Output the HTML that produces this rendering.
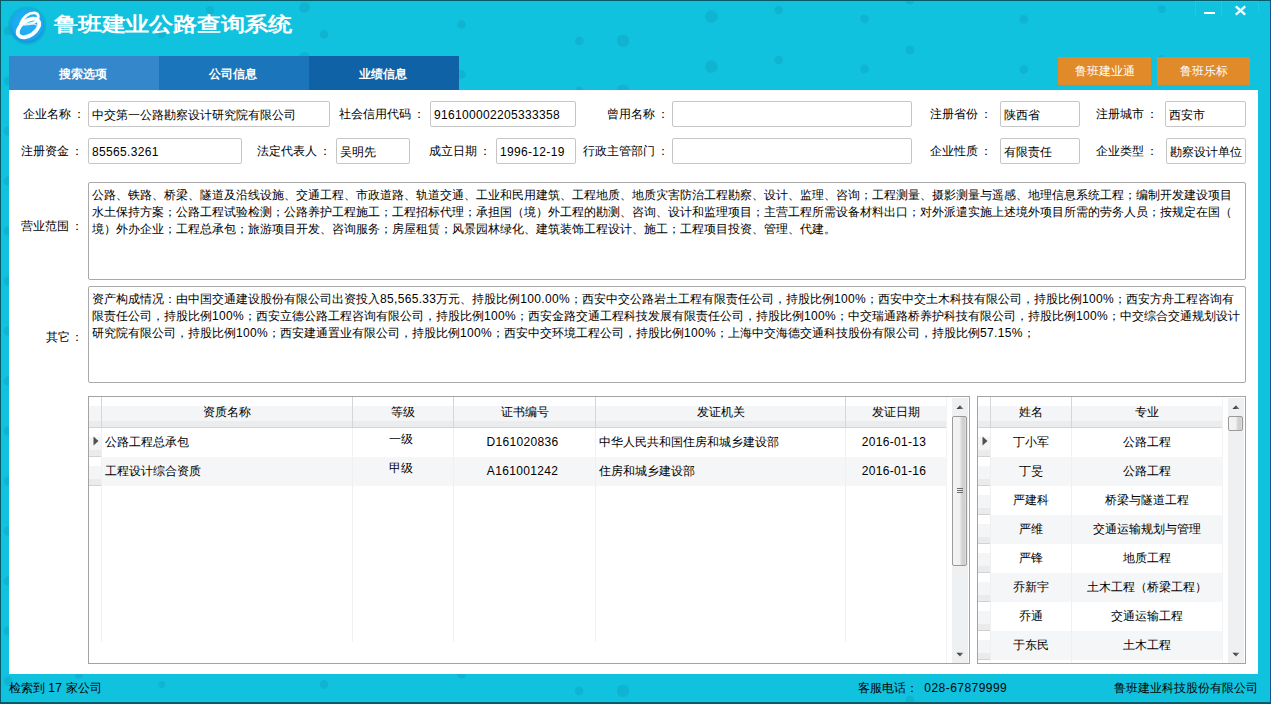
<!DOCTYPE html>
<html><head><meta charset="utf-8">
<style>
*{box-sizing:border-box;margin:0;padding:0}
html,body{width:1271px;height:704px;overflow:hidden}
body{position:relative;background:#11c2de;font-family:"Liberation Sans",sans-serif;font-size:12px;color:#000}
.a{position:absolute}
.nw{white-space:nowrap}
.co{margin-left:2px}
.d{letter-spacing:.33px}
#frame{position:absolute;left:0;top:0;width:1271px;height:704px;border:1px solid #075b68;border-right-color:#1f4f86;border-bottom-width:2px;pointer-events:none}
.tab{position:absolute;top:56px;height:34px;width:150px;color:#fff;text-align:center;line-height:36px;font-size:12px;font-weight:bold;text-indent:-2px}
.obtn{position:absolute;top:57px;height:28px;width:93px;background:#e08a2a;color:#fff;text-align:center;line-height:28px;font-size:12px}
#panel{position:absolute;left:9px;top:90px;width:1249px;height:584px;background:#fff}
.lbl{position:absolute;height:17px;line-height:17px;white-space:nowrap;text-align:right}
.inp{position:absolute;height:26px;border:1px solid #c6c6c6;border-radius:2px;line-height:24px;padding-left:3px;padding-top:1px;white-space:nowrap;overflow:hidden;background:#fff}
.ta{position:absolute;border:1px solid #a9a9a9;border-radius:2px;background:#fff;padding:4px 0 0 3px;line-height:17px}
.ta div{white-space:nowrap}
.grid{position:absolute;top:396px;height:268px;border:1px solid #a0a0a0;background:#fff;overflow:hidden}
.hdr{position:absolute;top:0;height:31px;background:linear-gradient(#fff 0,#fff 9px,#f4f5f6 10px,#f4f5f6 23px,#eaeced 24px,#eaeced 30px,#d6d6d6 30px)}
.vl{position:absolute;top:0;width:1px;background:#ececec}
.hv{position:absolute;top:0;width:1px;height:30px;background:#d4d4d4}
.row{position:absolute;height:29px;line-height:29px;white-space:nowrap}
.alt{background:#f5f6f7}
.rh{position:absolute;width:12px;height:29px;background:linear-gradient(#fff 0,#fff 10px,#f4f5f6 10px,#f4f5f6 21px,#e9ebec 21px,#e9ebec 28px,#d4d4d4 28px)}
.cell{position:absolute;top:0;height:29px;line-height:29px;white-space:nowrap;overflow:hidden}
.c{text-align:center}
.sb{position:absolute;top:0;width:17px;background:#f0f0f0}
.status{position:absolute;top:680px;height:17px;line-height:17px;white-space:nowrap}
</style></head><body>

<svg class="a" style="left:0;top:0" width="1271" height="704"><defs><pattern id="dp" x="0" y="0" width="1271" height="50" patternUnits="userSpaceOnUse"><g fill="#0fb4d1"><circle cx="8" cy="31" r="4.5"/><circle cx="79" cy="25" r="4"/><circle cx="162" cy="34.5" r="3.5"/><circle cx="210" cy="10" r="4"/><circle cx="304.5" cy="7.5" r="5.5"/><circle cx="324" cy="34.5" r="4.4"/><circle cx="461.5" cy="24.5" r="4.4"/><circle cx="579.3" cy="40.8" r="4.4"/><circle cx="623" cy="40.8" r="6.3"/><circle cx="711.4" cy="16.5" r="6.3"/><circle cx="778.7" cy="10" r="4.4"/><circle cx="864.5" cy="18.8" r="4.4"/><circle cx="910" cy="0" r="4.5"/><circle cx="910" cy="50" r="4.5"/><circle cx="1023.8" cy="19.3" r="4.4"/><circle cx="1161.8" cy="9.1" r="4.2"/></g></pattern></defs><rect width="1271" height="704" fill="url(#dp)"/></svg>
<!-- logo -->
<svg class="a" style="left:8px;top:6px" width="40" height="40" viewBox="0 0 40 40">
  <defs>
    <radialGradient id="lg" cx="50%" cy="45%" r="55%">
      <stop offset="0" stop-color="#25b6f5"/>
      <stop offset="0.8" stop-color="#1aa8f0"/>
      <stop offset="1" stop-color="#1290e0"/>
    </radialGradient>
  </defs>
  <circle cx="19.3" cy="19.7" r="19.2" fill="#0ea6c4" opacity=".5"/>
  <circle cx="19.3" cy="19.7" r="17" fill="url(#lg)"/>
  <ellipse cx="19.8" cy="22.3" rx="12.6" ry="7.6" transform="rotate(-36 19.8 22.3)" fill="none" stroke="#233f9c" stroke-width="1" opacity=".55"/>
  <ellipse cx="20.5" cy="22" rx="12.2" ry="7.3" transform="rotate(-36 20.5 22)" fill="none" stroke="#fbfdff" stroke-width="3.8"/>
  <path d="M12.5 18.5 C15 10.5 21 6.5 26.5 6.8 C31 7.2 31.5 12 28 15.2 C25.5 17.3 21 18.2 16.5 18.2" fill="none" stroke="#fbfdff" stroke-width="2.8" stroke-linecap="round"/>
  <path d="M17 18.2 C21 17.8 26 17.5 30 19.5" fill="none" stroke="#cfe8f8" stroke-width="1.2"/>
</svg>

<div class="a nw" style="left:54px;top:10px;font-size:24px;font-weight:900;color:#fff;line-height:34px;letter-spacing:-0.2px;transform:scaleY(.83);transform-origin:0 0">鲁班建业公路查询系统</div>

<!-- window buttons -->
<div class="a" style="left:1204px;top:12px;width:11px;height:2px;background:#fff"></div>
<svg class="a" style="left:1234px;top:5px" width="13" height="11" viewBox="0 0 13 11"><path d="M1.8 1.3 L11.2 9.7 M11.2 1.3 L1.8 9.7" stroke="#fff" stroke-width="2.3"/></svg>
<div class="a" style="left:1195px;top:1px;width:27px;height:14px;border:1px dotted rgba(255,255,255,.14);border-bottom:0"></div>
<div class="a" style="left:1222px;top:1px;width:37px;height:11px;border:1px dotted rgba(255,255,255,.14);border-bottom:0;border-left:0"></div>

<!-- tabs -->
<div class="tab" style="left:9px;background:#3587cb">搜索选项</div>
<div class="tab" style="left:159px;background:#1a75ba">公司信息</div>
<div class="tab" style="left:309px;background:#0f62a5">业绩信息</div>

<div class="obtn" style="left:1058px">鲁班建业通</div>
<div class="obtn" style="left:1157px">鲁班乐标</div>

<div id="panel"></div>

<!-- form row 1 -->
<div class="lbl" style="left:23px;top:106px">企业名称<span class="co">：</span></div>
<div class="inp" style="left:88px;top:101px;width:242px">中交第一公路勘察设计研究院有限公司</div>
<div class="lbl" style="left:339px;top:106px">社会信用代码<span class="co">：</span></div>
<div class="inp" style="left:430px;top:101px;width:146px"><span class="d">916100002205333358</span></div>
<div class="lbl" style="left:607px;top:106px">曾用名称<span class="co">：</span></div>
<div class="inp" style="left:672px;top:101px;width:240px"></div>
<div class="lbl" style="left:930px;top:106px">注册省份<span class="co">：</span></div>
<div class="inp" style="left:1000px;top:101px;width:80px">陕西省</div>
<div class="lbl" style="left:1096px;top:106px">注册城市<span class="co">：</span></div>
<div class="inp" style="left:1165px;top:101px;width:81px">西安市</div>

<!-- form row 2 -->
<div class="lbl" style="left:21px;top:143px">注册资金<span class="co">：</span></div>
<div class="inp" style="left:88px;top:138px;width:154px"><span class="d">85565.3261</span></div>
<div class="lbl" style="left:257px;top:143px">法定代表人<span class="co">：</span></div>
<div class="inp" style="left:336px;top:138px;width:74px">吴明先</div>
<div class="lbl" style="left:429px;top:143px">成立日期<span class="co">：</span></div>
<div class="inp" style="left:496px;top:138px;width:80px"><span class="d">1996-12-19</span></div>
<div class="lbl" style="left:583px;top:143px">行政主管部门<span class="co">：</span></div>
<div class="inp" style="left:672px;top:138px;width:240px"></div>
<div class="lbl" style="left:930px;top:143px">企业性质<span class="co">：</span></div>
<div class="inp" style="left:1000px;top:138px;width:80px">有限责任</div>
<div class="lbl" style="left:1096px;top:143px">企业类型<span class="co">：</span></div>
<div class="inp" style="left:1166px;top:138px;width:80px">勘察设计单位</div>

<!-- textareas -->
<div class="lbl" style="left:21px;top:218px">营业范围<span class="co">：</span></div>
<div class="ta" style="left:88px;top:182px;width:1158px;height:98px">
<div>公路、铁路、桥梁、隧道及沿线设施、交通工程、市政道路、轨道交通、工业和民用建筑、工程地质、地质灾害防治工程勘察、设计、监理、咨询；工程测量、摄影测量与遥感、地理信息系统工程；编制开发建设项目</div>
<div>水土保持方案；公路工程试验检测；公路养护工程施工；工程招标代理；承担国（境）外工程的勘测、咨询、设计和监理项目；主营工程所需设备材料出口；对外派遣实施上述境外项目所需的劳务人员；按规定在国（</div>
<div>境）外办企业；工程总承包；旅游项目开发、咨询服务；房屋租赁；风景园林绿化、建筑装饰工程设计、施工；工程项目投资、管理、代建。</div>
</div>

<div class="lbl" style="left:46px;top:329px">其它<span class="co" style="margin-left:1px">：</span></div>
<div class="ta" style="left:88px;top:286px;width:1158px;height:97px">
<div>资产构成情况：由中国交通建设股份有限公司出资投入<span class="d">85,565.33</span>万元、持股比例<span class="d">100.00%</span>；西安中交公路岩土工程有限责任公司，持股比例<span class="d">100%</span>；西安中交土木科技有限公司，持股比例<span class="d">100%</span>；西安方舟工程咨询有</div>
<div>限责任公司，持股比例<span class="d">100%</span>；西安立德公路工程咨询有限公司，持股比例<span class="d">100%</span>；西安金路交通工程科技发展有限责任公司，持股比例<span class="d">100%</span>；中交瑞通路桥养护科技有限公司，持股比例<span class="d">100%</span>；中交综合交通规划设计</div>
<div>研究院有限公司，持股比例<span class="d">100%</span>；西安建通置业有限公司，持股比例<span class="d">100%</span>；西安中交环境工程公司，持股比例<span class="d">100%</span>；上海中交海德交通科技股份有限公司，持股比例<span class="d">57.15%</span>；</div>
</div>

<!-- GRIDS -->
<div class="a" style="left:88px;top:396px;width:882px;height:268px;border:1px solid #a3a3a3;background:#fff;overflow:hidden">
<div class="a" style="left:0;top:0;width:857px;height:31px;background:linear-gradient(#fff 0,#fff 9px,#f4f5f6 9px,#f4f5f6 24px,#eaecee 24px,#eaecee 30px,#d4d4d4 30px,#d4d4d4 31px)"></div>
<div class="a" style="left:0;top:31px;width:12px;height:29px;background:linear-gradient(#fff 0,#fff 9px,#f4f5f6 9px,#f4f5f6 22px,#e9ebec 22px,#e9ebec 28px,#d2d2d2 28px,#d2d2d2 29px)"></div>
<div class="a" style="left:12px;top:60px;width:845px;height:29px;background:#f5f6f7"></div>
<div class="a" style="left:0;top:60px;width:12px;height:29px;background:linear-gradient(#fff 0,#fff 9px,#f4f5f6 9px,#f4f5f6 22px,#e9ebec 22px,#e9ebec 28px,#d2d2d2 28px,#d2d2d2 29px)"></div>
<div class="a" style="left:12px;top:0;width:1px;height:31px;background:#d6d6d6"></div>
<div class="a" style="left:12px;top:31px;width:1px;height:214px;background:#f0f0f0"></div>
<div class="a" style="left:263px;top:0;width:1px;height:31px;background:#d6d6d6"></div>
<div class="a" style="left:263px;top:31px;width:1px;height:214px;background:#f0f0f0"></div>
<div class="a" style="left:364px;top:0;width:1px;height:31px;background:#d6d6d6"></div>
<div class="a" style="left:364px;top:31px;width:1px;height:214px;background:#f0f0f0"></div>
<div class="a" style="left:506px;top:0;width:1px;height:31px;background:#d6d6d6"></div>
<div class="a" style="left:506px;top:31px;width:1px;height:214px;background:#f0f0f0"></div>
<div class="a" style="left:756px;top:0;width:1px;height:31px;background:#d6d6d6"></div>
<div class="a" style="left:756px;top:31px;width:1px;height:214px;background:#f0f0f0"></div>
<div class="a" style="left:857px;top:0;width:1px;height:268px;background:#f3f3f3"></div>
<div class="a nw" style="left:13px;top:7px;width:250px;height:17px;line-height:17px;text-align:center">资质名称</div>
<div class="a nw" style="left:264px;top:7px;width:100px;height:17px;line-height:17px;text-align:center">等级</div>
<div class="a nw" style="left:365px;top:7px;width:141px;height:17px;line-height:17px;text-align:center">证书编号</div>
<div class="a nw" style="left:507px;top:7px;width:249px;height:17px;line-height:17px;text-align:center">发证机关</div>
<div class="a nw" style="left:757px;top:7px;width:100px;height:17px;line-height:17px;text-align:center">发证日期</div>
<div class="a nw" style="left:16px;top:37px;width:247px;height:17px;line-height:17px">公路工程总承包</div>
<div class="a nw" style="left:262px;top:34px;width:100px;height:17px;line-height:17px;text-align:center">一级</div>
<div class="a nw" style="left:363px;top:37px;width:141px;height:17px;line-height:17px;text-align:center"><span class="d">D161020836</span></div>
<div class="a nw" style="left:510px;top:37px;width:246px;height:17px;line-height:17px">中华人民共和国住房和城乡建设部</div>
<div class="a nw" style="left:755px;top:37px;width:100px;height:17px;line-height:17px;text-align:center"><span class="d">2016-01-13</span></div>
<div class="a nw" style="left:16px;top:66px;width:247px;height:17px;line-height:17px">工程设计综合资质</div>
<div class="a nw" style="left:262px;top:63px;width:100px;height:17px;line-height:17px;text-align:center">甲级</div>
<div class="a nw" style="left:363px;top:66px;width:141px;height:17px;line-height:17px;text-align:center"><span class="d">A161001242</span></div>
<div class="a nw" style="left:510px;top:66px;width:246px;height:17px;line-height:17px">住房和城乡建设部</div>
<div class="a nw" style="left:755px;top:66px;width:100px;height:17px;line-height:17px;text-align:center"><span class="d">2016-01-16</span></div>
<svg class="a" style="left:4px;top:39px" width="6" height="10" viewBox="0 0 6 10"><path d="M0.5 0.5 L5.5 5 L0.5 9.5 Z" fill="#505050"/></svg>
<div class="a" style="left:863px;top:1px;width:16px;height:265px;background:#eff0f1"></div>
<svg class="a" style="left:867px;top:8px" width="8" height="5" viewBox="0 0 8 5"><defs><linearGradient id="ag863" x1="0" x2="1"><stop offset="0" stop-color="#222"/><stop offset="1" stop-color="#888"/></linearGradient></defs><path d="M0.5 4 L4 0.2 L7.5 4 Z" fill="url(#ag863)"/></svg>
<svg class="a" style="left:867px;top:255px" width="8" height="5" viewBox="0 0 8 5"><path d="M0.5 0.8 L4 4.5 L7.5 0.8 Z" fill="url(#ag863)"/></svg>
<div class="a" style="left:863px;top:19px;width:15px;height:150px;border:1px solid #9a9a9a;border-radius:2px;background:linear-gradient(90deg,#f3f3f3 0,#f1f1f1 50%,#d2d2d2 70%,#cfcfcf 90%,#e6e6e6 100%)"></div>
<div class="a" style="left:868px;top:91px;width:6px;height:1px;background:#6e6e6e"></div>
<div class="a" style="left:868px;top:93px;width:6px;height:1px;background:#6e6e6e"></div>
<div class="a" style="left:868px;top:95px;width:6px;height:1px;background:#6e6e6e"></div>
</div>
<div class="a" style="left:977px;top:396px;width:269px;height:268px;border:1px solid #a3a3a3;background:#fff;overflow:hidden">
<div class="a" style="left:0;top:0;width:244px;height:31px;background:linear-gradient(#fff 0,#fff 9px,#f4f5f6 9px,#f4f5f6 24px,#eaecee 24px,#eaecee 30px,#d4d4d4 30px,#d4d4d4 31px)"></div>
<div class="a" style="left:0;top:31px;width:12px;height:29px;background:linear-gradient(#fff 0,#fff 9px,#f4f5f6 9px,#f4f5f6 22px,#e9ebec 22px,#e9ebec 28px,#d2d2d2 28px,#d2d2d2 29px)"></div>
<div class="a" style="left:12px;top:60px;width:232px;height:29px;background:#f5f6f7"></div>
<div class="a" style="left:0;top:60px;width:12px;height:29px;background:linear-gradient(#fff 0,#fff 9px,#f4f5f6 9px,#f4f5f6 22px,#e9ebec 22px,#e9ebec 28px,#d2d2d2 28px,#d2d2d2 29px)"></div>
<div class="a" style="left:0;top:89px;width:12px;height:29px;background:linear-gradient(#fff 0,#fff 9px,#f4f5f6 9px,#f4f5f6 22px,#e9ebec 22px,#e9ebec 28px,#d2d2d2 28px,#d2d2d2 29px)"></div>
<div class="a" style="left:12px;top:118px;width:232px;height:29px;background:#f5f6f7"></div>
<div class="a" style="left:0;top:118px;width:12px;height:29px;background:linear-gradient(#fff 0,#fff 9px,#f4f5f6 9px,#f4f5f6 22px,#e9ebec 22px,#e9ebec 28px,#d2d2d2 28px,#d2d2d2 29px)"></div>
<div class="a" style="left:0;top:147px;width:12px;height:29px;background:linear-gradient(#fff 0,#fff 9px,#f4f5f6 9px,#f4f5f6 22px,#e9ebec 22px,#e9ebec 28px,#d2d2d2 28px,#d2d2d2 29px)"></div>
<div class="a" style="left:12px;top:176px;width:232px;height:29px;background:#f5f6f7"></div>
<div class="a" style="left:0;top:176px;width:12px;height:29px;background:linear-gradient(#fff 0,#fff 9px,#f4f5f6 9px,#f4f5f6 22px,#e9ebec 22px,#e9ebec 28px,#d2d2d2 28px,#d2d2d2 29px)"></div>
<div class="a" style="left:0;top:205px;width:12px;height:29px;background:linear-gradient(#fff 0,#fff 9px,#f4f5f6 9px,#f4f5f6 22px,#e9ebec 22px,#e9ebec 28px,#d2d2d2 28px,#d2d2d2 29px)"></div>
<div class="a" style="left:12px;top:234px;width:232px;height:29px;background:#f5f6f7"></div>
<div class="a" style="left:0;top:234px;width:12px;height:29px;background:linear-gradient(#fff 0,#fff 9px,#f4f5f6 9px,#f4f5f6 22px,#e9ebec 22px,#e9ebec 28px,#d2d2d2 28px,#d2d2d2 29px)"></div>
<div class="a" style="left:12px;top:0;width:1px;height:31px;background:#d6d6d6"></div>
<div class="a" style="left:12px;top:31px;width:1px;height:237px;background:#f0f0f0"></div>
<div class="a" style="left:93px;top:0;width:1px;height:31px;background:#d6d6d6"></div>
<div class="a" style="left:93px;top:31px;width:1px;height:237px;background:#f0f0f0"></div>
<div class="a" style="left:244px;top:0;width:1px;height:268px;background:#f3f3f3"></div>
<div class="a nw" style="left:13px;top:7px;width:80px;height:17px;line-height:17px;text-align:center">姓名</div>
<div class="a nw" style="left:94px;top:7px;width:150px;height:17px;line-height:17px;text-align:center">专业</div>
<div class="a nw" style="left:13px;top:37px;width:80px;height:17px;line-height:17px;text-align:center">丁小军</div>
<div class="a nw" style="left:94px;top:37px;width:150px;height:17px;line-height:17px;text-align:center">公路工程</div>
<div class="a nw" style="left:13px;top:66px;width:80px;height:17px;line-height:17px;text-align:center">丁旻</div>
<div class="a nw" style="left:94px;top:66px;width:150px;height:17px;line-height:17px;text-align:center">公路工程</div>
<div class="a nw" style="left:13px;top:95px;width:80px;height:17px;line-height:17px;text-align:center">严建科</div>
<div class="a nw" style="left:94px;top:95px;width:150px;height:17px;line-height:17px;text-align:center">桥梁与隧道工程</div>
<div class="a nw" style="left:13px;top:124px;width:80px;height:17px;line-height:17px;text-align:center">严维</div>
<div class="a nw" style="left:94px;top:124px;width:150px;height:17px;line-height:17px;text-align:center">交通运输规划与管理</div>
<div class="a nw" style="left:13px;top:153px;width:80px;height:17px;line-height:17px;text-align:center">严锋</div>
<div class="a nw" style="left:94px;top:153px;width:150px;height:17px;line-height:17px;text-align:center">地质工程</div>
<div class="a nw" style="left:13px;top:182px;width:80px;height:17px;line-height:17px;text-align:center">乔新宇</div>
<div class="a nw" style="left:94px;top:182px;width:150px;height:17px;line-height:17px;text-align:center">土木工程（桥梁工程）</div>
<div class="a nw" style="left:13px;top:211px;width:80px;height:17px;line-height:17px;text-align:center">乔通</div>
<div class="a nw" style="left:94px;top:211px;width:150px;height:17px;line-height:17px;text-align:center">交通运输工程</div>
<div class="a nw" style="left:13px;top:240px;width:80px;height:17px;line-height:17px;text-align:center">于东民</div>
<div class="a nw" style="left:94px;top:240px;width:150px;height:17px;line-height:17px;text-align:center">土木工程</div>
<svg class="a" style="left:4px;top:39px" width="6" height="10" viewBox="0 0 6 10"><path d="M0.5 0.5 L5.5 5 L0.5 9.5 Z" fill="#505050"/></svg>
<div class="a" style="left:250px;top:1px;width:16px;height:265px;background:#eff0f1"></div>
<svg class="a" style="left:254px;top:8px" width="8" height="5" viewBox="0 0 8 5"><defs><linearGradient id="ag250" x1="0" x2="1"><stop offset="0" stop-color="#222"/><stop offset="1" stop-color="#888"/></linearGradient></defs><path d="M0.5 4 L4 0.2 L7.5 4 Z" fill="url(#ag250)"/></svg>
<svg class="a" style="left:254px;top:255px" width="8" height="5" viewBox="0 0 8 5"><path d="M0.5 0.8 L4 4.5 L7.5 0.8 Z" fill="url(#ag250)"/></svg>
<div class="a" style="left:250px;top:19px;width:15px;height:15px;border:1px solid #9a9a9a;border-radius:2px;background:linear-gradient(90deg,#f3f3f3 0,#f1f1f1 50%,#d2d2d2 70%,#cfcfcf 90%,#e6e6e6 100%)"></div>
</div>
<!-- status -->
<div class="status" style="left:9px">检索到 <span class="d">17</span> 家公司</div>
<div class="status" style="left:858px">客服电话： <span class="d" style="letter-spacing:.45px;margin-left:3px">028-67879999</span></div>
<div class="status" style="left:1114px">鲁班建业科技股份有限公司</div>

<div id="frame"></div>
</body></html>
